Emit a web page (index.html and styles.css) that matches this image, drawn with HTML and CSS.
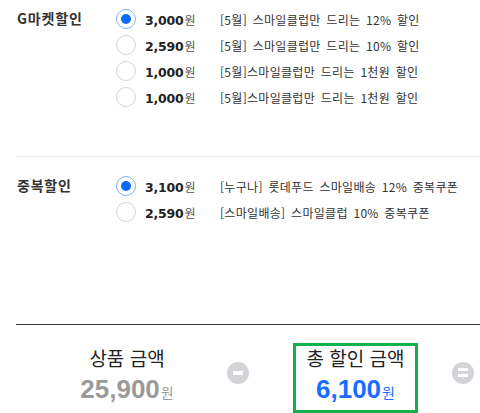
FILE: index.html
```html
<!DOCTYPE html>
<html lang="ko">
<head>
<meta charset="utf-8">
<link rel="stylesheet" href="styles.css">
</head>
<body>
<div class="page">
  <section class="group first">
    <div class="label">G마켓할인</div>
    <div class="rows">
      <div class="row"><span class="radio on"></span><span class="price">3,000<em>원</em></span><span class="desc">[5월] 스마일클럽만 드리는 12% 할인</span></div>
      <div class="row"><span class="radio"></span><span class="price">2,590<em>원</em></span><span class="desc">[5월] 스마일클럽만 드리는 10% 할인</span></div>
      <div class="row"><span class="radio"></span><span class="price">1,000<em>원</em></span><span class="desc">[5월]스마일클럽만 드리는 1천원 할인</span></div>
      <div class="row"><span class="radio"></span><span class="price">1,000<em>원</em></span><span class="desc">[5월]스마일클럽만 드리는 1천원 할인</span></div>
    </div>
  </section>
  <section class="group second">
    <div class="label">중복할인</div>
    <div class="rows">
      <div class="row"><span class="radio on"></span><span class="price">3,100<em>원</em></span><span class="desc">[누구나] 롯데푸드 스마일배송 12% 중복쿠폰</span></div>
      <div class="row"><span class="radio"></span><span class="price">2,590<em>원</em></span><span class="desc">[스마일배송] 스마일클럽 10% 중복쿠폰</span></div>
    </div>
  </section>
  <div class="summary">
    <div class="sum-item">
      <div class="sum-title">상품 금액</div>
      <div class="sum-value gray">25,900<em>원</em></div>
    </div>
    <span class="op minus"></span>
    <div class="sum-item total">
      <div class="sum-title">총 할인 금액</div>
      <div class="sum-value blue">6,100<em>원</em></div>
    </div>
    <span class="op equal"></span>
  </div>
</div>
</body>
</html>
```
FILE: styles.css
```css
* { box-sizing: border-box; }
html, body { margin: 0; padding: 0; background: #fff; }
body { font-family: "Noto Sans CJK KR", "Noto Sans", sans-serif; color: #333; }
.page { width: 480px; padding-left: 16px; }

.group { display: flex; }
.group.first { padding-top: 6px; padding-bottom: 46px; border-bottom: 1px solid #ebebf0; }
.group.second { padding-top: 16px; padding-bottom: 99px; border-bottom: 1px solid #333; }

.label { width: 100px; padding-left: 1px; font-size: 14px; font-weight: bold; line-height: 24px; color: #333; letter-spacing: 0.8px; }

.rows { display: flex; flex-direction: column; }
.row { display: flex; align-items: center; height: 26px; }

.radio { width: 20px; height: 20px; border-radius: 50%; border: 1px solid #d4d4d4; margin-right: 9px; position: relative; flex: none; }
.radio.on { border-color: #7eb0ff; }
.radio.on::after { content: ""; position: absolute; left: 4px; top: 4px; width: 10px; height: 10px; border-radius: 50%; background: #0a6cff; }

.price { width: 75px; font-family: "DejaVu Sans", sans-serif; font-weight: bold; font-size: 12.5px; color: #222; letter-spacing: -0.2px; }
.price em { font-style: normal; font-weight: normal; font-family: "Noto Sans CJK KR", sans-serif; font-size: 12px; color: #555; margin-left: 1px; letter-spacing: 0; }
.desc { font-size: 12px; color: #333; white-space: nowrap; letter-spacing: 0.3px; word-spacing: 2px; }

.summary { display: flex; align-items: flex-start; padding-top: 18px; }
.sum-item { text-align: center; }
.sum-item:first-child { width: 200px; margin-left: 11px; padding-top: 3px; }
.sum-title { font-size: 19px; line-height: 24px; color: #222; }
.sum-value { font-family: "Liberation Sans", Arial, sans-serif; font-weight: bold; font-size: 26px; line-height: 30px; margin-top: 4px; }
.sum-value em { font-style: normal; font-weight: normal; font-family: "Noto Sans CJK KR", sans-serif; font-size: 14px; margin-left: 1px; }
.gray { color: #9a9a9a; }
.blue { color: #1a6dff; }
.total { width: 125px; margin-left: 44px; border: 3px solid #12b14c; padding-bottom: 3px; }

.op { width: 22px; height: 22px; border-radius: 50%; background: #d3d3d8; position: relative; margin-top: 19px; flex: none; }
.op.minus::after { content: ""; position: absolute; left: 6px; top: 9px; width: 10px; height: 4px; background: #fff; }
.op.equal { margin-left: 34px; }
.op.equal::before, .op.equal::after { content: ""; position: absolute; left: 6px; width: 10px; height: 3px; background: #fff; }
.op.equal::before { top: 6px; }
.op.equal::after { top: 12px; }
```
